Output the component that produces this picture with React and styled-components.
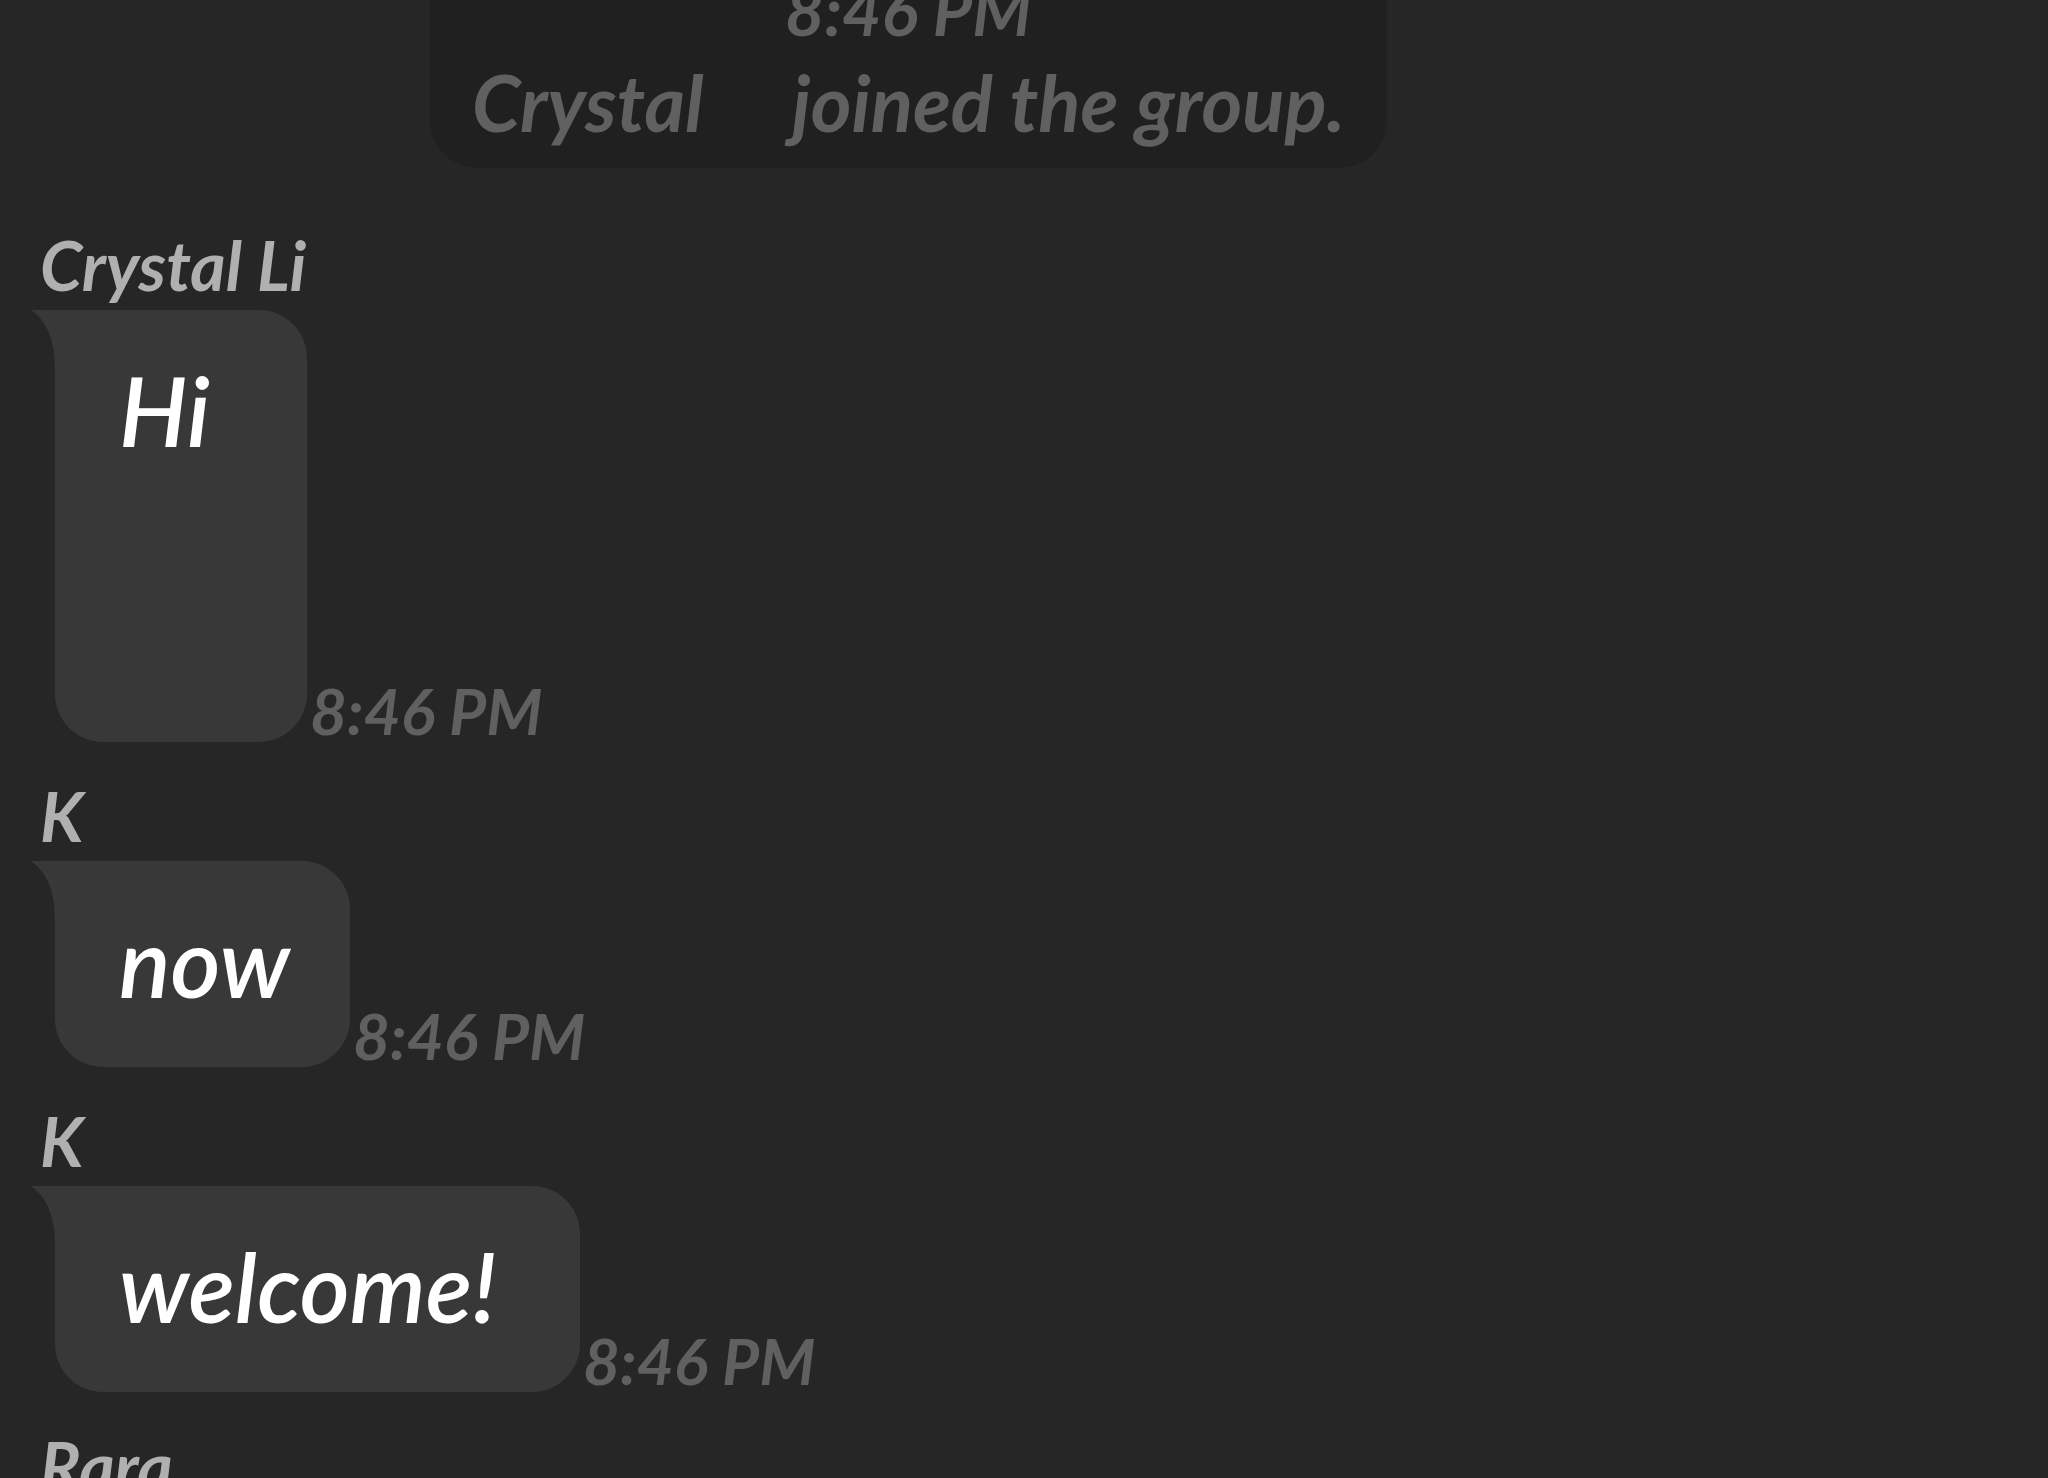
import React from "react";
import styled, { createGlobalStyle } from "styled-components";

const GlobalStyle = createGlobalStyle`
  *, *::before, *::after { box-sizing: border-box; }
  body {
    margin: 0;
    background: #262626;
    font-family: Lato, "Open Sans", sans-serif;
    font-style: italic;
    font-weight: 700;
  }
`;

const Chat = styled.main`
  height: 100vh;
  overflow: hidden;
  background: #262626;
`;

/* The feed is scrolled part way into the group notice. */
const Feed = styled.div`
  display: flex;
  flex-direction: column;
  align-items: flex-start;
  margin-top: -36px;
`;

const Notice = styled.section`
  display: flex;
  flex-direction: column;
  align-items: center;
  margin-left: 430px;
  padding: 0 42px 20px;
  border-radius: 0 0 48px 48px;
  background: #202020;
  color: #606060;
  font-size: 78px;
  line-height: 92px;
  white-space: nowrap;
`;

const NoticeTime = styled.time`
  font-size: 68px;
`;

const NoticeText = styled.p`
  display: flex;
  gap: 88px;
  margin: 0;
`;

const Messages = styled.ol`
  display: flex;
  flex-direction: column;
  gap: 32px;
  margin: 55px 0 0;
  padding: 0 0 0 40px;
  list-style: none;
`;

const Message = styled.li`
  display: flex;
  flex-direction: column;
  align-items: flex-start;
`;

const Sender = styled.span`
  color: #b0b0b0;
  font-size: 68px;
  line-height: 84px;
  padding-bottom: 3px;
  white-space: nowrap;
`;

const Row = styled.div`
  display: flex;
  align-items: flex-end;
  gap: 3px;
  padding-left: 15px;
`;

const bubbleWidths = { small: "252px", medium: "294px", large: "525px" };

const Bubble = styled.div`
  position: relative;
  min-width: ${({ $size }) => bubbleWidths[$size]};
  min-height: ${({ $tall }) => ($tall ? "432px" : "206px")};
  padding: 48px 60px 52px 64px;
  border-radius: 0 48px 48px 48px;
  background: #383838;
  color: #ffffff;
  font-size: 96px;
  font-weight: 600;
  line-height: 104px;
  white-space: nowrap;
`;

const Tail = styled.svg`
  position: absolute;
  top: 0;
  left: -24px;
  width: 25px;
  height: 60px;
  fill: #383838;
`;

const Time = styled.time`
  color: #606060;
  font-size: 64px;
  line-height: 62px;
  white-space: nowrap;
`;

const messages = [
  { sender: "Crystal Li", text: "Hi", time: "8:46 PM", size: "small", tall: true },
  { sender: "K", text: "now", time: "8:46 PM", size: "medium" },
  { sender: "K", text: "welcome!", time: "8:46 PM", size: "large" },
  { sender: "Rara" },
];

function ChatMessage({ sender, text, time, size, tall }) {
  return (
    <Message>
      <Sender>{sender}</Sender>
      {text && (
        <Row>
          <Bubble $size={size} $tall={tall}>
            <Tail viewBox="0 0 25 60" aria-hidden="true">
              <path d="M0 0H25V60H24C24 32 17 12 0 0Z" />
            </Tail>
            {text}
          </Bubble>
          <Time>{time}</Time>
        </Row>
      )}
    </Message>
  );
}

export default function App() {
  return (
    <>
      <GlobalStyle />
      <Chat>
        <Feed>
          <Notice>
            <NoticeTime>8:46 PM</NoticeTime>
            <NoticeText>
              <span>Crystal</span>
              <span>joined the group.</span>
            </NoticeText>
          </Notice>
          <Messages>
            {messages.map((message, index) => (
              <ChatMessage key={index} {...message} />
            ))}
          </Messages>
        </Feed>
      </Chat>
    </>
  );
}
